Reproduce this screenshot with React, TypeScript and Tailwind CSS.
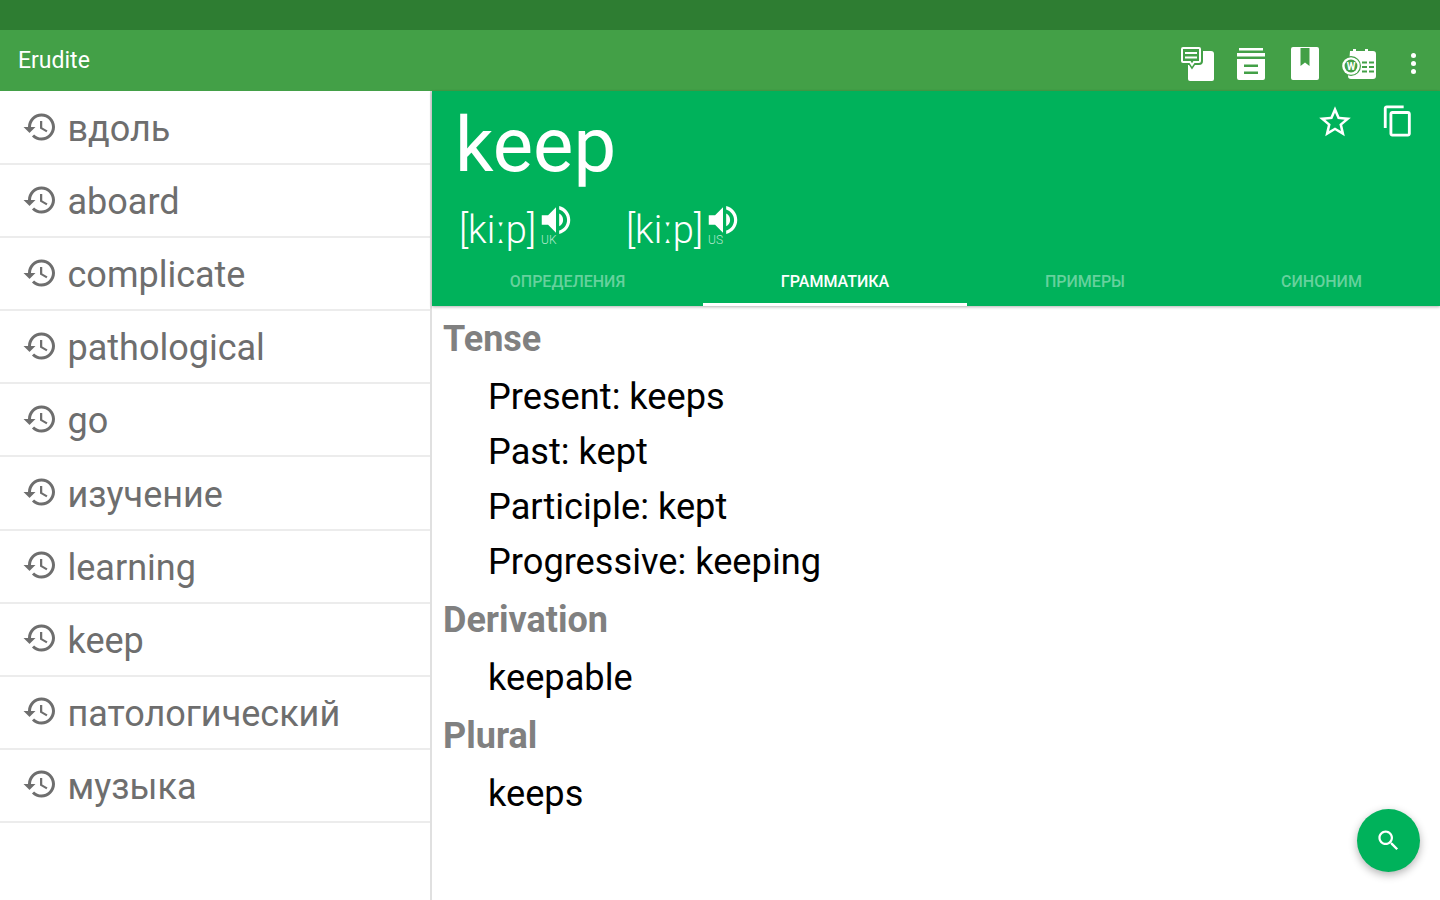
const HISTORY =
  "M13 3c-4.97 0-9 4.03-9 9H1l3.89 3.89.07.14L9 12H6c0-3.87 3.13-7 7-7s7 3.13 7 7-3.13 7-7 7c-1.93 0-3.68-.79-4.94-2.06l-1.42 1.42C8.27 19.99 10.51 21 13 21c4.97 0 9-4.03 9-9s-4.03-9-9-9zm-1 5v5l4.28 2.54.72-1.21-3.5-2.08V8H12z";
const VOLUME =
  "M3 9v6h4l5 5V4L7 9H3zm13.5 3c0-1.77-1.02-3.29-2.5-4.03v8.05c1.48-.73 2.5-2.25 2.5-4.02zM14 3.23v2.06c2.89.86 5 3.54 5 6.71s-2.11 5.85-5 6.71v2.06c4.01-.91 7-4.49 7-8.77s-2.99-7.86-7-8.77z";

const words = [
  "вдоль",
  "aboard",
  "complicate",
  "pathological",
  "go",
  "изучение",
  "learning",
  "keep",
  "патологический",
  "музыка",
];

const tabs = [
  { label: "ОПРЕДЕЛЕНИЯ", width: "w-[271px]", active: false },
  { label: "ГРАММАТИКА", width: "w-[264px]", active: true },
  { label: "ПРИМЕРЫ", width: "w-[236px]", active: false },
  { label: "СИНОНИМ", width: "w-[237px]", active: false },
];

function Icon({ d, className }: { d: string; className: string }) {
  return (
    <svg viewBox="0 0 24 24" fill="currentColor" className={className}>
      <path d={d} />
    </svg>
  );
}

function NotesIcon() {
  return (
    <svg viewBox="0 0 34 35" className="w-[34px] h-[35px] text-white">
      <path d="M8 5h23a3 3 0 0 1 3 3v25a2 2 0 0 1-2 2H10a2 2 0 0 1-2-2z" fill="currentColor" />
      <path d="M3 1h16a2 2 0 0 1 2 2v12a2 2 0 0 1-2 2h-5l-2 3-2-3H3a2 2 0 0 1-2-2V3a2 2 0 0 1 2-2z" fill="#43a047" stroke="#43a047" strokeWidth="4" />
      <path d="M3 2h16a1 1 0 0 1 1 1v12a1 1 0 0 1-1 1h-5l-2 3-2-3H3a1 1 0 0 1-1-1V3a1 1 0 0 1 1-1z" fill="#43a047" stroke="currentColor" strokeWidth="2" />
      <path d="M5 7h12M5 11.5h12" stroke="currentColor" strokeWidth="2" />
    </svg>
  );
}

function ArchiveIcon() {
  return (
    <svg viewBox="0 0 28 32" className="w-[28px] h-[32px] text-white">
      <path d="M2 0h24v2.5H2zM0 5h28v3.5H0z" fill="currentColor" />
      <path fillRule="evenodd" d="M0 11h28v19a2 2 0 0 1-2 2H2a2 2 0 0 1-2-2zM7 16.5v2.5h14v-2.5zM7 23.5v2.5h14v-2.5z" fill="currentColor" />
    </svg>
  );
}

function BookIcon() {
  return (
    <svg viewBox="0 0 28 33" className="w-[28px] h-[33px] text-white">
      <path fillRule="evenodd" d="M2 0h24a2 2 0 0 1 2 2v29a2 2 0 0 1-2 2H2a2 2 0 0 1-2-2V2a2 2 0 0 1 2-2zM9.5 1v18l4.5-3.5 4.5 3.5V1z" fill="currentColor" />
    </svg>
  );
}

function CalendarWordIcon() {
  return (
    <svg viewBox="0 0 35 30" className="w-[35px] h-[30px] text-white">
      <path d="M8 2h3V0h3v2h9V0h3v2h5a3 3 0 0 1 3 3v22a3 3 0 0 1-3 3H9a3 3 0 0 1-3-3z" fill="currentColor" />
      <path d="M20 13.5h5M27 13.5h5M20 18h5M27 18h5M20 22.5h5M27 22.5h5" stroke="#43a047" strokeWidth="2" />
      <circle cx="9" cy="17" r="10" fill="#43a047" />
      <circle cx="9" cy="17" r="8.8" fill="#ffffff" />
      <circle cx="9" cy="17" r="6.4" fill="#43a047" />
      <text x="9" y="20.5" textAnchor="middle" fontSize="10" fontWeight="700" fill="#ffffff" fontFamily="Roboto, sans-serif">
        W
      </text>
    </svg>
  );
}

function Pronunciation({ region, className }: { region: string; className: string }) {
  return (
    <div className={`flex items-start ${className}`}>
      <span className="w-[76px] text-[38px] leading-[47px] font-light text-white mt-[1px]">[kiːp]</span>
      <div className="flex flex-col -mt-[5px] ml-[3px]">
        <Icon d={VOLUME} className="w-[38px] h-[38px] -ml-[1px] text-white" />
        <span className="text-[12px] leading-[11px] font-light text-[#b3e8cd] -mt-[4px] ml-[3px]">{region}</span>
      </div>
    </div>
  );
}

function Section({ title, items }: { title: string; items: string[] }) {
  return (
    <div className="flex flex-col">
      <h3 className="h-[61px] pl-[11px] pt-[11px] text-[36px] leading-[44px] font-bold text-[#808080]">{title}</h3>
      {items.map((item) => (
        <p key={item} className="h-[55px] pl-[56px] pt-[8px] text-[36.2px] leading-[44px] text-black">
          {item}
        </p>
      ))}
    </div>
  );
}

export default function App() {
  return (
    <div className="w-[1440px] h-[900px] relative overflow-hidden flex flex-col bg-white font-['Roboto',sans-serif]">
      <div className="h-[30px] bg-[#2e7d32]" />
      <header className="h-[61px] bg-[#43a047] flex items-center pl-[18px]">
        <span className="text-[23px] text-white flex-1 mt-[2px]">Erudite</span>
        <div className="flex items-center mt-[6px] mr-[14px]">
          <NotesIcon />
          <div className="ml-[23px]">
            <ArchiveIcon />
          </div>
          <div className="ml-[26px]">
            <BookIcon />
          </div>
          <div className="ml-[23px]">
            <CalendarWordIcon />
          </div>
          <div className="flex flex-col gap-[3px] w-[26px] ml-[23px] items-center">
            <span className="w-[5px] h-[5px] rounded-full bg-white" />
            <span className="w-[5px] h-[5px] rounded-full bg-white" />
            <span className="w-[5px] h-[5px] rounded-full bg-white" />
          </div>
        </div>
      </header>

      <div className="flex flex-1">
        <aside className="w-[432px] pt-[1px] border-r-2 border-[#e0e0e0] flex flex-col">
          {words.map((word) => (
            <div key={word} className="h-[73.1px] border-b-2 border-[#ececec] flex items-center pl-[22px] gap-[10px]">
              <Icon d={HISTORY} className="w-[36px] h-[36px] text-[#6e6e6e] -mt-[2px]" />
              <span className="text-[36px] leading-[44px] text-[#6e6e6e] mt-[3px] -ml-[0.5px]">{word}</span>
            </div>
          ))}
        </aside>

        <main className="flex-1 flex flex-col">
          <div className="h-[215px] bg-[#00b25b] shadow-[0_1px_3px_rgba(0,0,0,0.3)] flex flex-col relative">
            <h1 className="h-[107px] pl-[23px] pt-[10px] text-[76px] leading-[88px] text-white">keep</h1>
            <div className="flex h-[65px] pl-[27px] pt-[8px]">
              <Pronunciation region="UK" className="w-[167px]" />
              <Pronunciation region="US" className="w-[167px]" />
            </div>
            <nav className="flex h-[43px]">
              {tabs.map((tab) => (
                <div
                  key={tab.label}
                  className={`${tab.width} flex justify-center pt-[7px] text-[16px] leading-[24px] font-medium ${
                    tab.active ? "text-white border-b-[3px] border-white" : "text-[#66d19d]"
                  }`}
                >
                  {tab.label}
                </div>
              ))}
            </nav>
            <div className="absolute top-[12px] right-[25px] flex gap-[27px] text-white">
              <Icon
                d="M22 9.24l-7.19-.62L12 2 9.19 8.63 2 9.24l5.46 4.73L5.82 21 12 17.27 18.18 21l-1.63-7.03L22 9.24zM12 15.4l-3.76 2.27 1-4.28-3.32-2.88 4.38-.38L12 6.1l1.71 4.04 4.38.38-3.32 2.88 1 4.28L12 15.4z"
                className="w-[38px] h-[38px]"
              />
              <Icon
                d="M16 1H4c-1.1 0-2 .9-2 2v14h2V3h12V1zm3 4H8c-1.1 0-2 .9-2 2v14c0 1.1.9 2 2 2h11c1.1 0 2-.9 2-2V7c0-1.1-.9-2-2-2zm0 16H8V7h11v14z"
                className="w-[34px] h-[34px] mt-[1px]"
              />
            </div>
          </div>

          <div className="flex flex-col">
            <Section title="Tense" items={["Present: keeps", "Past: kept", "Participle: kept", "Progressive: keeping"]} />
            <Section title="Derivation" items={["keepable"]} />
            <Section title="Plural" items={["keeps"]} />
          </div>
        </main>
      </div>

      <button className="absolute left-[1357px] top-[809px] w-[63px] h-[63px] rounded-full bg-[#00b25b] shadow-[0_3px_8px_rgba(0,0,0,0.3)] flex items-center justify-center text-white">
        <Icon
          d="M15.5 14h-.79l-.28-.27C15.41 12.59 16 11.11 16 9.5 16 5.91 13.09 3 9.5 3S3 5.91 3 9.5 5.91 16 9.5 16c1.61 0 3.09-.59 4.23-1.57l.27.28v.79l5 4.99L20.49 19l-4.99-5zm-6 0C7.01 14 5 11.99 5 9.5S7.01 5 9.5 5 14 7.01 14 9.5 11.99 14 9.5 14z"
          className="w-[27px] h-[27px]"
        />
      </button>
    </div>
  );
}
